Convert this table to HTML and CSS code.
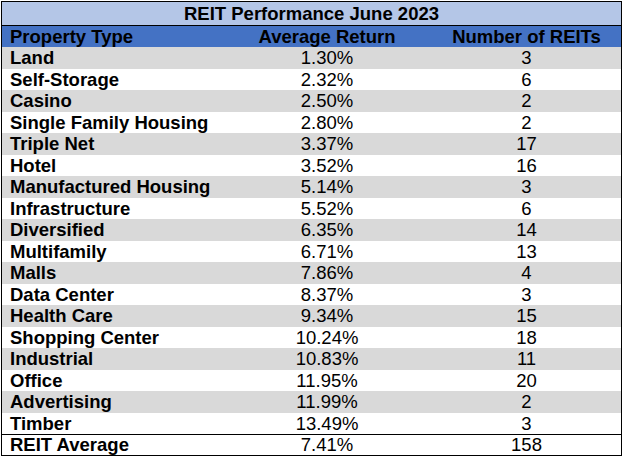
FILE: index.html
```html
<!DOCTYPE html>
<html>
<head>
<meta charset="utf-8">
<link rel="stylesheet" href="styles.css">
</head>
<body>
<div class="table">
  <div class="title">REIT Performance June 2023</div>
  <div class="row head"><div class="c1">Property Type</div><div class="c">Average Return</div><div class="c">Number of REITs</div></div>
  <div class="row g"><div class="c1">Land</div><div class="c">1.30%</div><div class="c">3</div></div>
  <div class="row"><div class="c1">Self-Storage</div><div class="c">2.32%</div><div class="c">6</div></div>
  <div class="row g"><div class="c1">Casino</div><div class="c">2.50%</div><div class="c">2</div></div>
  <div class="row"><div class="c1">Single Family Housing</div><div class="c">2.80%</div><div class="c">2</div></div>
  <div class="row g"><div class="c1">Triple Net</div><div class="c">3.37%</div><div class="c">17</div></div>
  <div class="row"><div class="c1">Hotel</div><div class="c">3.52%</div><div class="c">16</div></div>
  <div class="row g"><div class="c1">Manufactured Housing</div><div class="c">5.14%</div><div class="c">3</div></div>
  <div class="row"><div class="c1">Infrastructure</div><div class="c">5.52%</div><div class="c">6</div></div>
  <div class="row g"><div class="c1">Diversified</div><div class="c">6.35%</div><div class="c">14</div></div>
  <div class="row"><div class="c1">Multifamily</div><div class="c">6.71%</div><div class="c">13</div></div>
  <div class="row g"><div class="c1">Malls</div><div class="c">7.86%</div><div class="c">4</div></div>
  <div class="row"><div class="c1">Data Center</div><div class="c">8.37%</div><div class="c">3</div></div>
  <div class="row g"><div class="c1">Health Care</div><div class="c">9.34%</div><div class="c">15</div></div>
  <div class="row"><div class="c1">Shopping Center</div><div class="c">10.24%</div><div class="c">18</div></div>
  <div class="row g"><div class="c1">Industrial</div><div class="c">10.83%</div><div class="c">11</div></div>
  <div class="row"><div class="c1">Office</div><div class="c">11.95%</div><div class="c">20</div></div>
  <div class="row g"><div class="c1">Advertising</div><div class="c">11.99%</div><div class="c">2</div></div>
  <div class="row"><div class="c1">Timber</div><div class="c">13.49%</div><div class="c">3</div></div>
  <div class="row avg"><div class="c1">REIT Average</div><div class="c">7.41%</div><div class="c">158</div></div>
</div>
</body>
</html>
```
FILE: styles.css
```css
html, body {
  margin: 0;
  padding: 0;
  background: #ffffff;
}
body {
  font-family: "Liberation Sans", Arial, sans-serif;
  font-size: 18.5px;
  color: #000000;
}
.table {
  margin: 1px 0 0 1px;
  width: 621px;
  box-sizing: border-box;
  border: 1px solid #000000;
  display: flex;
  flex-direction: column;
}
.title {
  height: 23px;
  line-height: 23px;
  background: #b4c6e7;
  font-weight: bold;
  text-align: center;
  border-bottom: 1px solid #000000;
}
.row {
  display: grid;
  grid-template-columns: 220px 210px 1fr;
  height: 21.5px;
  align-items: center;
  line-height: 21px;
  background: #ffffff;
}
.row.g {
  background: #d9d9d9;
}
.row.head {
  height: 21px;
  background: #4472c4;
  font-weight: bold;
}
.row.avg {
  height: 20px;
  line-height: 20px;
  border-top: 1px solid #000000;
}
.c1 {
  padding-left: 8px;
  font-weight: bold;
  white-space: nowrap;
}
.c {
  text-align: center;
  white-space: nowrap;
}
```
